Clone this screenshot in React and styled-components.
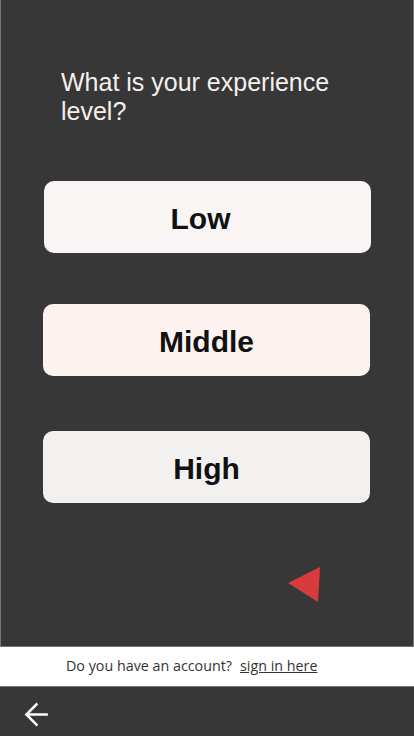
import React from 'react';
import styled, { createGlobalStyle } from 'styled-components';

const GlobalStyle = createGlobalStyle`
  html, body {
    margin: 0;
    padding: 0;
    background: #373737;
  }
  * {
    box-sizing: border-box;
  }
`;

const Screen = styled.div`
  width: 414px;
  height: 736px;
  display: flex;
  flex-direction: column;
  background: #373737;
`;

const Panel = styled.div`
  height: 647px;
  border: 1px solid #767676;
  border-top: none;
  padding: 68px 0 0 42px;
  display: flex;
  flex-direction: column;
`;

const Question = styled.h1`
  margin: 0 0 55px 18px;
  width: 300px;
  font-family: 'Liberation Sans', Arial, sans-serif;
  font-weight: 400;
  font-size: 25px;
  line-height: 29px;
  color: #f4f0ef;
`;

const Option = styled.button`
  width: 327px;
  height: 72px;
  margin: ${p => p.$margin};
  border: none;
  border-radius: 10px;
  background: ${p => p.$bg};
  font-family: 'Liberation Sans', Arial, sans-serif;
  font-weight: 700;
  font-size: 30px;
  color: #111;
  cursor: pointer;
  padding: 3px ${p => p.$shift || 0}px 0 0;
`;

const NextRow = styled.div`
  display: flex;
  justify-content: flex-end;
  padding: 63px 92px 0 0;
`;

const SignInBar = styled.div`
  height: 39px;
  background: #fff;
  display: flex;
  align-items: center;
  padding: 0 0 2px 66px;
  gap: 8px;
  font-family: 'Open Sans', 'Noto Sans', sans-serif;
  font-size: 14.3px;
  color: #333;
`;

const SignInLink = styled.a`
  color: #333;
  text-decoration: underline;
  cursor: pointer;
`;

const Footer = styled.div`
  flex: 1;
  border-top: 1px solid #767676;
  display: flex;
  align-items: center;
  padding: 5px 0 0 23px;
`;

const options = [
  { label: 'Low', bg: '#f8f5f4', margin: '0 0 51px 1px', shift: 14 },
  { label: 'Middle', bg: '#fcf3f1', margin: '0 0 55px 0' },
  { label: 'High', bg: '#f3f1f0', margin: '0' },
];

export default function App() {
  return (
    <>
      <GlobalStyle />
      <Screen>
        <Panel>
          <Question>What is your experience level?</Question>
          {options.map(o => (
            <Option key={o.label} $bg={o.bg} $margin={o.margin} $shift={o.shift}>
              {o.label}
            </Option>
          ))}
          <NextRow>
            <svg width="34" height="38" viewBox="0 0 34 38">
              <polygon points="1,17 33,1 31,36" fill="#d83b3b" />
            </svg>
          </NextRow>
        </Panel>
        <SignInBar>
          <span>Do you have an account?</span>
          <SignInLink>sign in here</SignInLink>
        </SignInBar>
        <Footer>
          <svg width="27" height="27" viewBox="0 0 24 24" fill="none" stroke="#fff" strokeWidth="2.2" strokeLinecap="square">
            <path d="M21 12H4" />
            <path d="M12 3l-9 9 9 9" />
          </svg>
        </Footer>
      </Screen>
    </>
  );
}
